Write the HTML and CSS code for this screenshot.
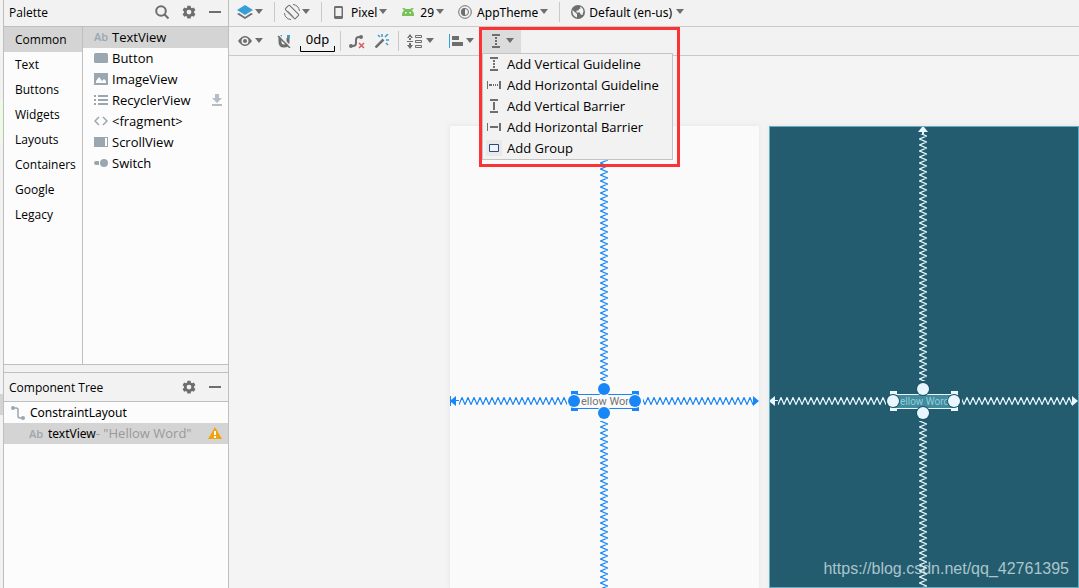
FILE: index.html
```
<!DOCTYPE html>
<html lang="en">
<head>
<meta charset="utf-8">
<title>Layout Editor</title>
<link rel="stylesheet" href="styles.css">
</head>
<body>
<svg class="defs" aria-hidden="true">
  <symbol id="caret" viewBox="0 0 8 6"><path fill="#6e6e6e" d="M0 0h8L4 5z"/></symbol>
  <symbol id="gear" viewBox="0 0 14 14"><path fill="#6e6e6e" fill-rule="evenodd" d="M5.4.8h3.2l.4 1.9 1 .6 1.9-.7 1.5 2.7-1.4 1.3v1.2l1.4 1.3-1.5 2.7-1.9-.7-1 .6-.4 1.9H5.400l-.4-1.9-1-.6-1.9.7L.6 9.100l1.400-1.300V6.600L.6 5.300l1.500-2.700 1.900.7 1-.6zM7 4.700a2.400 2.400 0 1 0 0 4.800 2.400 2.400 0 0 0 0-4.800z"/></symbol>
  <symbol id="dash" viewBox="0 0 12 14"><path fill="#6e6e6e" d="M0 6h12v2H0z"/></symbol>
  <symbol id="vguide" viewBox="0 0 16 16"><path fill="#6e6e6e" d="M4 1h8v2H4zM4 13h8v2H4zM7 4h2v2H7zM7 7h2v2H7zM7 10h2v2H7z"/></symbol>
  <symbol id="hguide" viewBox="0 0 16 16"><path fill="#6e6e6e" d="M1 4h1v8H1zM13 4h2v8h-2zM3 7h3v2H3zM7 7h1v2H7zM9 7h1v2H9zM11 7h1v2h-1z"/></symbol>
</svg>
<div class="app">
  <div class="gutter"><span class="gutter-code"></span><span class="gutter-mark"></span></div>

  <aside class="side">
    <section class="palette">
      <header class="head">
        <h2>Palette</h2>
        <button class="tool" aria-label="Search"><svg width="16" height="16" viewBox="0 0 16 16"><g fill="none" stroke="#6e6e6e" stroke-width="2"><circle cx="8" cy="7" r="4.800"/><path d="M11.500 10.500l4 4"/></g></svg></button>
        <button class="tool" aria-label="Palette settings"><svg width="14" height="14"><use href="#gear"/></svg></button>
        <button class="tool" aria-label="Hide palette"><svg width="12" height="14"><use href="#dash"/></svg></button>
      </header>
      <div class="palette-body">
        <nav class="cats">
          <button class="cat on">Common</button>
          <button class="cat">Text</button>
          <button class="cat">Buttons</button>
          <button class="cat">Widgets</button>
          <button class="cat">Layouts</button>
          <button class="cat">Containers</button>
          <button class="cat">Google</button>
          <button class="cat">Legacy</button>
        </nav>
        <div class="items">
          <button class="item on"><span class="ab">Ab</span>TextView</button>
          <button class="item"><svg width="14" height="14"><rect y="2" width="14" height="10" rx="1.500" fill="#9aa7b0"/></svg>Button</button>
          <button class="item"><svg width="14" height="14"><path fill="#9aa7b0" d="M0 1h14v12H0z"/><path fill="#fcfcfc" d="M2 11V9l3-4 3 4 2-2 2 2v2z"/></svg>ImageView</button>
          <button class="item"><svg width="14" height="14"><path fill="#9aa7b0" d="M0 2h2v2H0zM4 2h10v2H4zM0 6h2v2H0zM4 6h10v2H4zM0 10h2v2H0zM4 10h10v2H4z"/></svg>RecyclerView<svg class="download" width="12" height="14"><path fill="#b5bec5" d="M4 1h4v4h3L6 10 1 5h3zM1 11h10v2H1z"/></svg></button>
          <button class="item"><svg width="14" height="14"><path fill="none" stroke="#9aa7b0" stroke-width="1.500" d="M5 3L1 7l4 4M9 3l4 4-4 4"/></svg>&lt;fragment&gt;</button>
          <button class="item"><svg width="14" height="14"><path fill="#9aa7b0" d="M0 2h14v10H0z"/><path fill="#fcfcfc" d="M11 3h2v8h-2z"/></svg>ScrollView</button>
          <button class="item"><svg width="14" height="14"><path fill="#9aa7b0" d="M2 5h3v4H2a2 2 0 0 1 0-4z"/><circle cx="10" cy="7" r="4" fill="#9aa7b0"/></svg>Switch</button>
        </div>
      </div>
    </section>

    <section class="tree">
      <header class="head tall">
        <h2>Component Tree</h2>
        <button class="tool" aria-label="Tree settings"><svg width="14" height="14"><use href="#gear"/></svg></button>
        <button class="tool" aria-label="Hide tree"><svg width="12" height="14"><use href="#dash"/></svg></button>
      </header>
      <button class="node"><svg width="14" height="14"><g fill="#9aa7b0"><circle cx="2" cy="2" r="2"/><circle cx="12" cy="12" r="2"/></g><path fill="none" stroke="#9aa7b0" stroke-width="1.500" d="M2 2h3q2 0 2 2v6q0 2 2 2h3"/></svg>ConstraintLayout</button>
      <button class="node child"><span class="ab">Ab</span><span>textView<span class="hint">- "Hellow Word"</span></span><svg class="warn" width="14" height="13"><path fill="#f0a30a" d="M7 0l7 12H0z"/><path fill="#fff" d="M6 4h2v4H6zM6 9h2v2H6z"/></svg></button>
    </section>
  </aside>

  <main class="editor">
    <div class="bar">
      <button class="pick layers"><svg width="16" height="16"><path fill="#389fd6" d="M8 1l8 5-8 5-8-5z"/><path fill="#6e6e6e" d="M0 10l2-1 6 4 6-4 2 1-8 5z"/></svg><svg width="8" height="6"><use href="#caret"/></svg></button>
      <span class="sep"></span>
      <button class="pick"><svg width="16" height="16" viewBox="0 0 16 16"><g fill="none" stroke="#6e6e6e"><rect x="5" y="1" width="6" height="14" rx="1" transform="rotate(-45 8 8)"/><path d="M3.500 7l5.500 5.500M9 .5q5.500.5 6.500 6.500M.5 9Q1 15 7 15.500"/></g></svg><svg width="8" height="6"><use href="#caret"/></svg></button>
      <span class="sep"></span>
      <button class="pick device"><svg width="9" height="13"><path fill="#6e6e6e" fill-rule="evenodd" d="M1 0h7l1 1v11l-1 1H1l-1-1V1zM1.500 2v8h6V2z"/></svg><span>Pixel</span><svg width="8" height="6"><use href="#caret"/></svg></button>
      <button class="pick api"><svg width="12" height="8"><path fill="#78c257" d="M0 8q0-4 2-6L0 0h2l2 1h4l2-1h2l-2 2q2 2 2 6z"/><path fill="#fff" d="M3 4h1.500v1.500H3zM7.500 4H9v1.500H7.500z"/></svg><span>29</span><svg width="8" height="6"><use href="#caret"/></svg></button>
      <button class="pick theme"><svg width="14" height="14"><g fill="none" stroke="#6e6e6e"><circle cx="7" cy="7" r="6.300"/><circle cx="7" cy="7" r="3.500"/></g><path fill="#6e6e6e" d="M7 3a4 4 0 0 0 0 8z"/></svg><span>AppTheme</span><svg width="8" height="6"><use href="#caret"/></svg></button>
      <span class="sep"></span>
      <button class="pick locale"><svg width="14" height="14"><circle cx="7" cy="7" r="7" fill="#6e6e6e"/><path fill="#f2f2f2" d="M1.500 5l4.500 4v3.500Q1 11 1.500 5zM9 1.500q3 1 3.500 4.500l-1 4-2-.5-.5-2H5.500V5.500h2L8 4l1.500-.5z"/></svg><span>Default (en-us)</span><svg width="8" height="6"><use href="#caret"/></svg></button>
    </div>

    <div class="bar second">
      <button class="pick eye"><svg width="14" height="12"><path fill="#6e6e6e" fill-rule="evenodd" d="M0 6q7-10 14 0-7 10-14 0zM7 2.500a3.500 3.500 0 1 0 0 7 3.500 3.500 0 0 0 0-7z"/><circle cx="7" cy="6" r="2" fill="#6e6e6e"/></svg><svg width="8" height="6"><use href="#caret"/></svg></button>
      <button class="pick" aria-label="Autoconnect"><svg width="14" height="14"><path fill="none" stroke="#6e6e6e" stroke-width="3" d="M3 3v5q0 4 4 4t4-4V4"/><path fill="#389fd6" d="M2 1h3v2H2zM10 1h3v3h-3z"/><path stroke="#f2f2f2" stroke-width="1.500" d="M2 1l12 12"/><path stroke="#6e6e6e" stroke-width="1.500" d="M1 2l12 12"/></svg></button>
      <button class="margin">0dp<svg width="35" height="7"><path fill="none" stroke="#000" d="M.5 0v5.500h34V0"/></svg></button>
      <span class="sep"></span>
      <button class="pick" aria-label="Clear constraints"><svg width="16" height="15"><path fill="none" stroke="#6e6e6e" stroke-width="2" d="M1 12h3q3 0 3-3V6q0-3 3-3h2"/><g fill="#6e6e6e"><circle cx="2" cy="12" r="2"/><circle cx="12" cy="3" r="2"/></g><path stroke="#db5860" stroke-width="1.500" d="M10 9l5 5M15 9l-5 5"/></svg></button>
      <button class="pick" aria-label="Infer constraints"><svg width="14" height="14"><path stroke="#6e6e6e" stroke-width="2.500" d="M.5 13.500l8-8"/><path stroke="#389fd6" stroke-width="1.500" d="M7 0v3M13 0l-3 3M11 6h3M3 1l2 2M11 9l2 2"/></svg></button>
      <span class="sep"></span>
      <button class="pick pack"><svg width="16" height="15"><path fill="#6e6e6e" d="M0 4h6L3 0zM2 3h2v3H2zM0 7h6v1H0zM0 11h6l-3 4zM2 9h2v3H2z"/><g fill="none" stroke="#6e6e6e"><path d="M8.500 1.500h6v2h-6zM8.500 6.500h6v2h-6zM8.500 11.500h6v2h-6z"/></g></svg><svg width="8" height="6"><use href="#caret"/></svg></button>
      <button class="pick align"><svg width="15" height="14"><path fill="#389fd6" d="M0 0h1v14H0z"/><path fill="#6e6e6e" d="M3 2h7v4H3zM3 8h11v4H3z"/></svg><svg width="8" height="6"><use href="#caret"/></svg></button>
      <div class="guides">
        <button class="pick open"><svg width="16" height="16"><use href="#vguide"/></svg><svg width="8" height="6"><use href="#caret"/></svg></button>
        <div class="frame">
          <div class="menu" role="menu">
            <button role="menuitem"><svg width="16" height="16"><use href="#vguide"/></svg>Add Vertical Guideline</button>
            <button role="menuitem"><svg width="16" height="16"><use href="#hguide"/></svg>Add Horizontal Guideline</button>
            <button role="menuitem"><svg width="16" height="16"><path fill="#6e6e6e" d="M4 1h8v2H4zM4 13h8v2H4zM7 4h2v8H7z"/></svg>Add Vertical Barrier</button>
            <button role="menuitem"><svg width="16" height="16"><path fill="#6e6e6e" d="M1 4h1v8H1zM13 4h2v8h-2zM4 7h8v2H4z"/></svg>Add Horizontal Barrier</button>
            <button role="menuitem"><svg width="16" height="16"><path fill="#e9e9e9" d="M0 0h16v16H0z"/><path fill="#f2f2f2" stroke="#27488f" d="M3.500 4.500h9v7h-9z"/></svg>Add Group</button>
          </div>
        </div>
      </div>
    </div>

    <div class="surface">
      <div class="screen design">
        <svg class="wires" width="310" height="1200">
          <defs>
            <pattern id="zh" x="9" y="271" width="6" height="8" patternUnits="userSpaceOnUse"><path class="line" d="M-3 .5l3 7 3-7 3 7 3-7"/></pattern>
            <pattern id="zv" x="150" y="1" width="8" height="6" patternUnits="userSpaceOnUse"><path class="line" d="M7.500-3l-7 3 7 3-7 3 7 3"/></pattern>
          </defs>
          <rect x="150" y="8" width="8" height="247" fill="url(#zv)"/>
          <rect x="150" y="295" width="8" height="905" fill="url(#zv)"/>
          <rect x="9" y="271" width="108" height="8" fill="url(#zh)"/>
          <rect x="193" y="271" width="110" height="8" fill="url(#zh)"/>
          <path class="solid" d="M0 270h1v4l5-4v4h3v1H6v5l-5-4v4H0zM303 270l6 5-6 5z"/>
          <path class="solid" d="M121 265h7v20h-7zM182 265h7v20h-7z"/>
          <path class="box" d="M124 268.500h61v14h-61z"/>
          <text x="131" y="279">ellow Wor</text>
          <g class="knob"><circle cx="124" cy="275" r="6"/><circle cx="185" cy="275" r="6"/><circle cx="154" cy="263" r="6"/><circle cx="154" cy="287" r="6"/></g>
        </svg>
      </div>
      <div class="screen blueprint">
        <svg class="wires" width="310" height="1200">
          <defs>
            <pattern id="bh" x="9" y="271" width="6" height="8" patternUnits="userSpaceOnUse"><path class="line" d="M-3 .5l3 7 3-7 3 7 3-7"/></pattern>
            <pattern id="bv" x="150" y="1" width="8" height="6" patternUnits="userSpaceOnUse"><path class="line" d="M7.500-3l-7 3 7 3-7 3 7 3"/></pattern>
          </defs>
          <rect x="150" y="8" width="8" height="247" fill="url(#bv)"/>
          <rect x="150" y="295" width="8" height="905" fill="url(#bv)"/>
          <rect x="9" y="271" width="108" height="8" fill="url(#bh)"/>
          <rect x="193" y="271" width="110" height="8" fill="url(#bh)"/>
          <path class="solid" d="M0 270h1v4l5-4v4h3v1H6v5l-5-4v4H0zM303 270l6 5-6 5zM150 0h8v1h-3l4 5H149l4-5h-3zM153 6h2v2h-2z"/>
          <path class="solid" d="M121 265h7v20h-7zM182 265h7v20h-7z"/>
          <path class="box" d="M124 268.500h61v14h-61z"/>
          <text x="131" y="279">ellow Word</text>
          <g class="knob"><circle cx="124" cy="275" r="6"/><circle cx="185" cy="275" r="6"/><circle cx="154" cy="263" r="6"/><circle cx="154" cy="287" r="6"/></g>
        </svg>
      </div>
      <span class="watermark">https://blog.csdn.net/qq_42761395</span>
    </div>
  </main>
</div>
</body>
</html>
```
FILE: styles.css
```
* { box-sizing: border-box; }
body { margin: 0; font: 12px/20px "Noto Sans", sans-serif; color: #000; }
button { border: 0; padding: 0; margin: 0; background: none; font: inherit; color: inherit; text-align: left; white-space: nowrap; }
svg { display: block; flex: none; }
.defs { position: absolute; width: 0; height: 0; }
.app { display: flex; height: 100vh; overflow: hidden; background: #f2f2f2; }

.gutter { width: 3px; flex: none; display: flex; flex-direction: column; }
.gutter-code { height: 42px; margin-top: 100px; background: #edfbe4; }
.gutter-mark { height: 21px; margin-top: 252px; background: #d4d4d4; }

.side { width: 226px; flex: none; display: flex; flex-direction: column; border: solid #bfbfbf; border-width: 0 1px; }
.palette { height: 365px; display: flex; flex-direction: column; border-bottom: 1px solid #bfbfbf; font-family: "Open Sans", sans-serif; }
.head { display: flex; align-items: center; height: 27px; flex: none; padding: 0 7px 2px 5px; gap: 13px; border-bottom: 1px solid #bfbfbf; }
.head.tall { height: 29px; padding-bottom: 0; }
.head h2 { margin: 0 auto 0 0; font: 12px/18px "Open Sans", sans-serif; padding-top: 2px; }
.palette-body { flex: 1; display: flex; background: #fcfcfc; }
.cats { width: 79px; flex: none; border-right: 1px solid #bfbfbf; display: flex; flex-direction: column; }
.cat { height: 25px; padding-left: 11px; }
.items { flex: 1; display: flex; flex-direction: column; }
.item { height: 21px; display: flex; align-items: center; gap: 4px; padding: 0 5px 1px 11px; font-size: 13px; }
.on { background: #d4d4d4; }
.ab { width: 14px; font: 600 11px/20px "Open Sans", sans-serif; color: #9aa7b0; }
.download { margin-left: auto; }

.tree { flex: 1; margin-top: 7px; border-top: 1px solid #bfbfbf; background: #fcfcfc; display: flex; flex-direction: column; }
.tree .head { background: #f2f2f2; }
.node { height: 21px; display: flex; align-items: center; gap: 5px; padding: 0 6px 0 7px; }
.child { padding-left: 25px; background: #d4d4d4; }
.hint { color: #999; font: 13px/20px "Open Sans", sans-serif; }
.warn { margin-left: auto; }

.editor { flex: 1; min-width: 0; display: flex; flex-direction: column; }
.bar { display: flex; align-items: center; height: 27px; flex: none; padding: 0 8px 2px; border-bottom: 1px solid #c9c9c9; font-size: 12px; }
.second { height: 29px; padding: 0 9px; }
.sep { width: 1px; height: 20px; background: #c9c9c9; margin: 0 9px 0 11px; flex: none; }
.pick { display: flex; align-items: center; gap: 2px; flex: none; }
.bar span { padding-top: 1px; }
.device { margin-left: 3px; }
.device span { margin-left: 6px; }
.api { margin-left: 15px; }
.api span { margin-left: 4px; }
.theme { margin-left: 14px; }
.theme span { margin-left: 3px; }
.locale { gap: 4px; margin-left: 2px; }
.eye { gap: 3px; margin-right: 4px; }
.margin { width: 35px; margin-left: 9px; padding-top: 4px; text-align: center; font-size: 13px; line-height: 13px; }
.second .sep { margin: 0 8px 0 5px; }
.second .pick + .pick { margin-left: 10px; }
.second .pick + .sep { margin-left: 9px; }
.second .pack { gap: 3px; }
.second .pack + .align { margin-left: 15px; }
.guides { position: relative; margin-left: 8px; }
.open { width: 39px; height: 24px; padding-left: 6px; background: #dcdcdc; }
.frame { position: absolute; z-index: 2; left: -3px; top: -2px; width: 201px; border: 3px solid #fb3334; padding: 23px 4px 4px 0; }
.menu { background: #f2f2f2; border: 1px solid #c4c4c4; display: flex; flex-direction: column; }
.menu button { height: 21px; display: flex; align-items: center; gap: 5px; padding: 0 0 1px 3px; font: 13px/20px "Open Sans", sans-serif; }

.surface { position: relative; flex: 1; min-height: 0; overflow: hidden; display: flex; gap: 10px; padding: 70px 0 0 221px; background: #f4f4f4; }
.screen { flex: none; width: 310px; overflow: hidden; box-shadow: 0 0 5px 1px #e8e8e8; }
.design { width: 309px; background: #fafafa; color: #1886f7; }
.blueprint { background: #235c6e; color: #e8f7ff; outline: 1px solid #65afc4; outline-offset: -1px; }
.line { fill: none; stroke: currentColor; stroke-width: 1.2; }
.solid { fill: currentColor; }
.box { fill: #fafafa; stroke: currentColor; }
.blueprint .box { fill: #438a9c; }
.wires text { font: 11px Roboto, sans-serif; fill: #757575; }
.wires .knob { fill: currentColor; stroke: #fafafa; stroke-width: 2; paint-order: stroke; }
.blueprint .wires text { font-size: 10px; fill: #8ad0df; }
.blueprint .wires .knob { stroke: #1f5162; }
.watermark { position: absolute; right: 10px; bottom: 8px; font: 16px/22px "Liberation Sans", sans-serif; color: rgba(220, 232, 236, .75); }
```
